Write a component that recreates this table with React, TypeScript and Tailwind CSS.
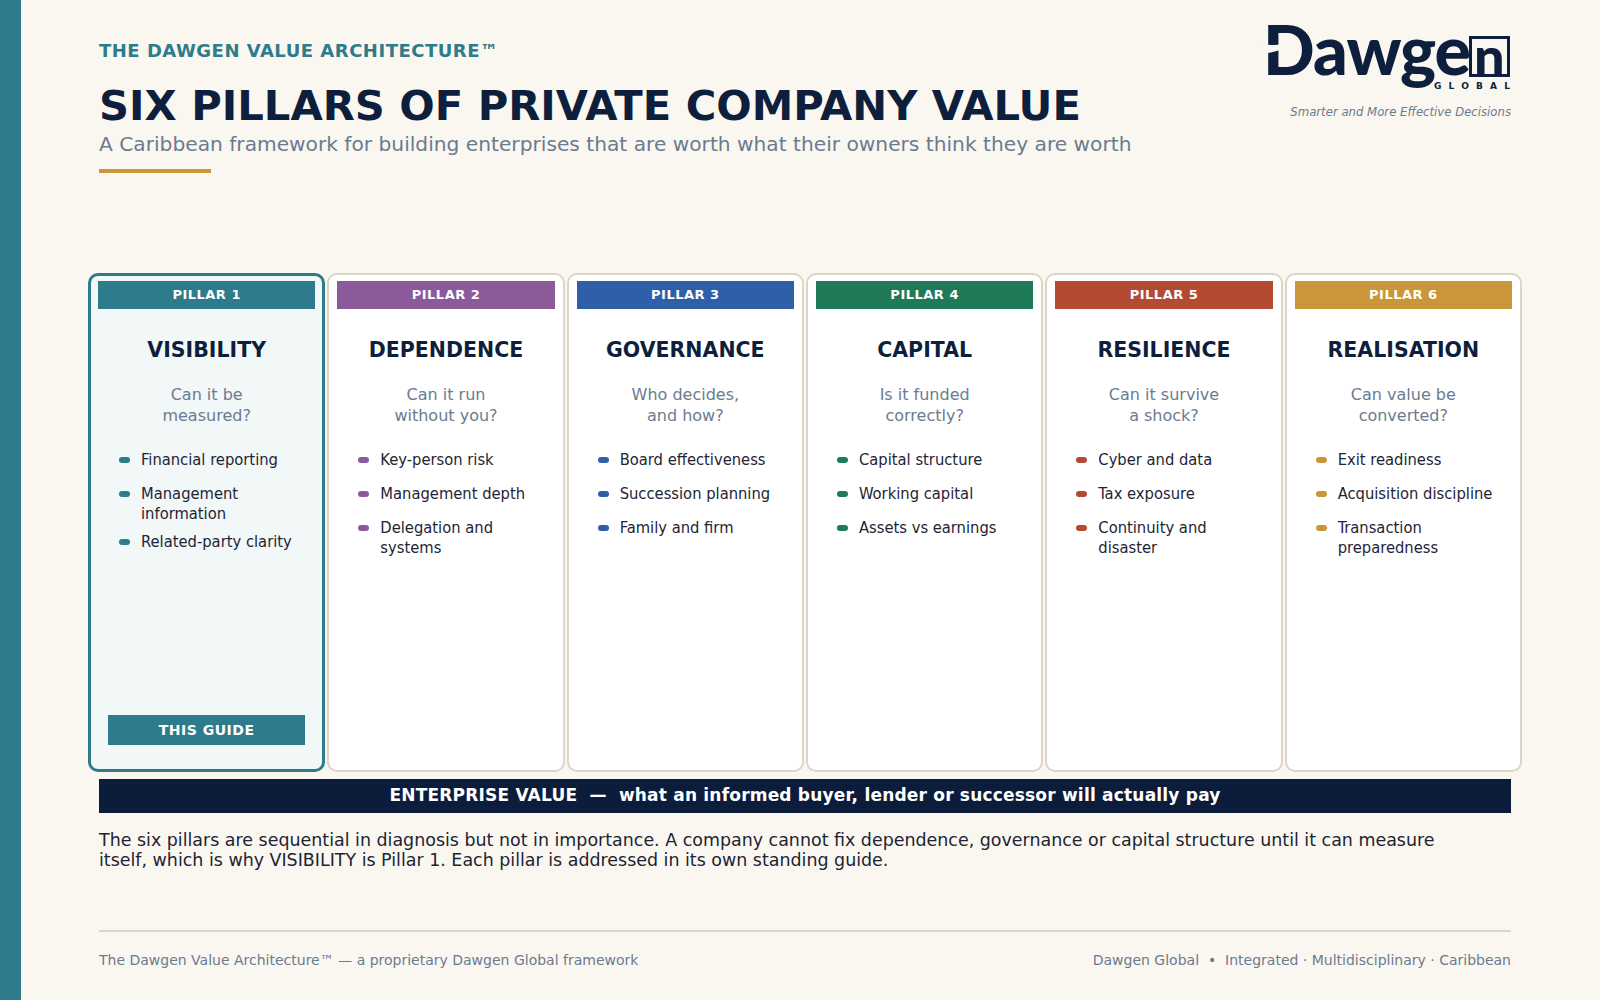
const pillars = [
  {
    n: 1,
    name: "VISIBILITY",
    q: ["Can it be", "measured?"],
    items: ["Financial reporting", "Management information", "Related-party clarity"],
    bar: "bg-[#2e7b8c]",
  },
  {
    n: 2,
    name: "DEPENDENCE",
    q: ["Can it run", "without you?"],
    items: ["Key-person risk", "Management depth", "Delegation and systems"],
    bar: "bg-[#8b5a9b]",
  },
  {
    n: 3,
    name: "GOVERNANCE",
    q: ["Who decides,", "and how?"],
    items: ["Board effectiveness", "Succession planning", "Family and firm"],
    bar: "bg-[#2f5fa9]",
  },
  {
    n: 4,
    name: "CAPITAL",
    q: ["Is it funded", "correctly?"],
    items: ["Capital structure", "Working capital", "Assets vs earnings"],
    bar: "bg-[#1f7b57]",
  },
  {
    n: 5,
    name: "RESILIENCE",
    q: ["Can it survive", "a shock?"],
    items: ["Cyber and data", "Tax exposure", "Continuity and disaster"],
    bar: "bg-[#b34a31]",
  },
  {
    n: 6,
    name: "REALISATION",
    q: ["Can value be", "converted?"],
    items: ["Exit readiness", "Acquisition discipline", "Transaction preparedness"],
    bar: "bg-[#c9973a]",
  },
];

function Logo() {
  return (
    <svg width="250" height="75" viewBox="0 0 250 75" className="block overflow-visible">
      <text
        x="2"
        y="51"
        fontFamily="Lato, 'DejaVu Sans', sans-serif"
        fontWeight="900"
        fontSize="68"
        letterSpacing="-1"
        fill="#0d1f3c"
      >
        Dawge
      </text>
      {/* blade cut into the D */}
      <path d="M0 20 Q18 23 33 17 Q22 28 0 30 Z" fill="#faf7f1" />
      {/* boxed n */}
      <rect x="209.5" y="13.5" width="38" height="38" fill="none" stroke="#0d1f3c" strokeWidth="3" />
      <text
        x="213"
        y="52"
        fontFamily="Lato, 'DejaVu Sans', sans-serif"
        fontWeight="900"
        fontSize="54"
        fill="#0d1f3c"
      >
        n
      </text>
      <text
        x="173"
        y="65"
        fontFamily="'DejaVu Sans', sans-serif"
        fontWeight="bold"
        fontSize="9"
        letterSpacing="7.2"
        fill="#0d1f3c"
      >
        GLOBAL
      </text>
    </svg>
  );
}

function PillarCard({ p, active }: { p: (typeof pillars)[number]; active: boolean }) {
  return (
    <div
      className={
        active
          ? "flex h-[499px] flex-col rounded-[10px] border-[3px] border-[#2e7b8c] bg-[#f2f7f7] px-[7px] pt-[5px] pb-6"
          : "flex h-[499px] flex-col rounded-[10px] border-2 border-[#ddd6c7] bg-white px-2 pt-[6px] pb-6"
      }
    >
      {/* Pillar label */}
      <div className={`flex h-[28px] items-center justify-center ${p.bar}`}>
        <span className="text-[13px] font-bold tracking-[0.5px] text-white">PILLAR {p.n}</span>
      </div>

      <h2 className="mt-[28px] text-center text-[20.5px] font-bold leading-[26px] text-[#0d1f3c]">{p.name}</h2>

      <p className="mt-[21px] text-center text-[16px] leading-[21px] text-[#6b7b8f]">
        {p.q[0]}
        <br />
        {p.q[1]}
      </p>

      <ul className="mt-6 flex flex-col gap-2 pl-[21px] pr-3 font-['DejaVu_Sans_Condensed','DejaVu_Sans',sans-serif] font-stretch-condensed text-[16.4px] leading-[20px] text-[#1e2535]">
        {p.items.map((item) => (
          <li key={item} className="flex min-h-[26px] items-start">
            <span className={`mt-[7px] mr-[11px] h-[6px] w-[11px] shrink-0 rounded-full ${p.bar}`} />
            <span>{item}</span>
          </li>
        ))}
      </ul>

      {active && (
        <div className="mx-[10px] mt-auto flex h-[30px] items-center justify-center bg-[#2e7b8c]">
          <span className="text-[14px] font-bold tracking-[0.5px] text-white">THIS GUIDE</span>
        </div>
      )}
    </div>
  );
}

export default function App() {
  return (
    <div className="flex min-h-[1000px] w-full bg-[#faf7f1] font-['DejaVu_Sans',sans-serif]">
      <div className="w-[21px] shrink-0 bg-[#2e7b8c]" />

      <main className="flex-1 pt-6 pr-[89px] pl-[78px]">
        {/* Header */}
        <div className="flex items-start justify-between">
          <div className="pt-4">
            <div className="text-[18px] font-bold leading-[22px] tracking-[0.5px] text-[#2e7b8c]">
              THE DAWGEN VALUE ARCHITECTURE™
            </div>
            <h1 className="mt-5 text-[41.7px] font-bold leading-[48px] text-[#0d1f3c]">
              SIX PILLARS OF PRIVATE COMPANY VALUE
            </h1>
            <p className="mt-[2px] text-[20.2px] leading-[24px] text-[#6b7b8f]">
              A Caribbean framework for building enterprises that are worth what their owners think they are worth
            </p>
            <div className="mt-[13px] h-1 w-[112px] bg-[#c9973a]" />
          </div>

          <div className="flex flex-col items-end">
            <Logo />
            <div className="mt-[5px] text-[11.7px] italic leading-[16px] text-[#6b7b8f]">
              Smarter and More Effective Decisions
            </div>
          </div>
        </div>

        {/* Pillars */}
        <div className="-mx-[11px] mt-[100px] grid grid-cols-6 gap-[2px]">
          {pillars.map((p, i) => (
            <PillarCard key={p.n} p={p} active={i === 0} />
          ))}
        </div>

        {/* Enterprise value bar */}
        <div className="mt-[7px] flex h-[34px] items-center justify-center bg-[#0c1d3b]">
          <span className="text-[17px] font-bold tracking-[0.2px] text-white">
            ENTERPRISE VALUE{"\u00a0\u00a0—\u00a0\u00a0"}what an informed buyer, lender or successor will actually pay
          </span>
        </div>

        <p className="mt-[17px] max-w-[1370px] text-[17.45px] leading-[20.4px] text-[#1c2433]">
          The six pillars are sequential in diagnosis but not in importance. A company cannot fix dependence, governance
          or capital structure until it can measure itself, which is why VISIBILITY is Pillar 1. Each pillar is addressed
          in its own standing guide.
        </p>

        {/* Footer */}
        <div className="mt-[59px] flex items-center justify-between border-t-2 border-[#ddd6c6] pt-5 text-[14px] leading-[16px] text-[#6b7b8f]">
          <span>The Dawgen Value Architecture™ — a proprietary Dawgen Global framework</span>
          <span>Dawgen Global{"\u00a0\u00a0•\u00a0\u00a0"}Integrated · Multidisciplinary · Caribbean</span>
        </div>
      </main>
    </div>
  );
}
